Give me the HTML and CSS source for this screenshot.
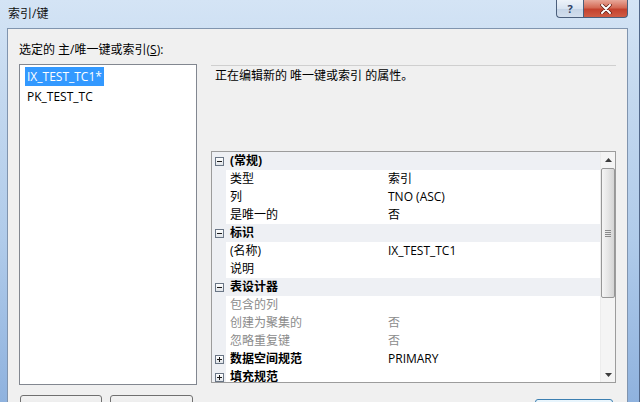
FILE: index.html
```html
<!DOCTYPE html>
<html lang="zh-CN">
<head>
<meta charset="utf-8">
<title>索引/键</title>
<link rel="stylesheet" href="styles.css">
</head>
<body>
<div class="window">
  <div class="titlebar">
    <span class="title">索引/键</span>
    <div class="caption">
      <div class="cap help"><span class="qmark">?</span></div>
      <div class="cap close">
        <svg width="12" height="10" viewBox="0 0 12 10"><path d="M2 1 L10 9 M10 1 L2 9" stroke="#5a1a12" stroke-width="3.4" stroke-linecap="round"/><path d="M2 1 L10 9 M10 1 L2 9" stroke="#ffffff" stroke-width="2" stroke-linecap="round"/></svg>
      </div>
    </div>
  </div>
  <div class="client">
    <div class="label">选定的 主/唯一键或索引(<u>S</u>):</div>
    <div></div>
    <div class="listbox">
      <div class="item"><span class="sel">IX_TEST_TC1*</span></div>
      <div class="item"><span class="txt">PK_TEST_TC</span></div>
    </div>
    <div class="rightpanel">
      <div class="desc">正在编辑新的 唯一键或索引 的属性。</div>
      <div class="pgrid">
        <div class="rows">
          <div class="row cat"><span class="gut"><i class="tog"><b class="h"></b></i></span><span class="name">(常规)</span><span class="val"></span></div>
          <div class="row"><span class="gut"></span><span class="name">类型</span><span class="val">索引</span></div>
          <div class="row"><span class="gut"></span><span class="name">列</span><span class="val">TNO (ASC)</span></div>
          <div class="row"><span class="gut"></span><span class="name">是唯一的</span><span class="val">否</span></div>
          <div class="row cat"><span class="gut"><i class="tog"><b class="h"></b></i></span><span class="name">标识</span><span class="val"></span></div>
          <div class="row"><span class="gut"></span><span class="name">(名称)</span><span class="val">IX_TEST_TC1</span></div>
          <div class="row"><span class="gut"></span><span class="name">说明</span><span class="val"></span></div>
          <div class="row cat"><span class="gut"><i class="tog"><b class="h"></b></i></span><span class="name">表设计器</span><span class="val"></span></div>
          <div class="row dis"><span class="gut"></span><span class="name">包含的列</span><span class="val"></span></div>
          <div class="row dis"><span class="gut"></span><span class="name">创建为聚集的</span><span class="val">否</span></div>
          <div class="row dis"><span class="gut"></span><span class="name">忽略重复键</span><span class="val">否</span></div>
          <div class="row"><span class="gut"><i class="tog"><b class="h"></b><b class="v"></b></i></span><span class="name strong">数据空间规范</span><span class="val">PRIMARY</span></div>
          <div class="row"><span class="gut"><i class="tog"><b class="h"></b><b class="v"></b></i></span><span class="name strong">填充规范</span><span class="val"></span></div>
        </div>
        <div class="sb">
          <div class="sb-btn"><svg width="7" height="4" viewBox="0 0 7 4"><path d="M0 4 L3.5 0 L7 4 Z" fill="#3c3c3c"/></svg></div>
          <div class="thumb"><span class="grip"></span><span class="grip"></span><span class="grip"></span><span class="grip"></span></div>
          <div class="track"></div>
          <div class="sb-btn"><svg width="7" height="4" viewBox="0 0 7 4"><path d="M0 0 L7 0 L3.5 4 Z" fill="#3c3c3c"/></svg></div>
        </div>
      </div>
    </div>
    <div class="btns">
      <div class="btn w82"></div>
      <div class="btn w83"></div>
    </div>
    <div class="btns end">
      <div class="btn focus"></div>
    </div>
  </div>
</div>
</body>
</html>
```

FILE: styles.css
```css
* { box-sizing: border-box; margin: 0; padding: 0; }
html, body { width: 640px; height: 402px; overflow: hidden; }
body {
  font-family: "Open Sans", "Noto Sans CJK SC", sans-serif;
  font-size: 12px;
  color: #000;
  background: #9dbbe0;
}
.window {
  width: 640px;
  height: 402px;
  overflow: hidden;
  display: flex;
  flex-direction: column;
  background: linear-gradient(180deg, #d4e4f5 0%, #c3d8ef 25%, #b0cbea 60%, #8fb2de 100%);
  border-right: 1px solid #52688a;
}
.titlebar {
  height: 28px;
  flex: none;
  display: flex;
  padding: 0 11px 0 8px;
}
.title { line-height: 28px; font-size: 12px; color: #111; }
.caption { margin-left: auto; display: flex; height: 18px; }
.cap {
  height: 18px;
  display: flex;
  align-items: center;
  justify-content: center;
  border: 1px solid #4b5f7c;
  border-top: none;
}
.help {
  width: 27px;
  border-right: none;
  border-radius: 0 0 0 4px;
  background: linear-gradient(180deg, #eef3f9 0%, #d9e4f1 50%, #c6d5e7 55%, #d3dfee 100%);
}
.qmark { font-weight: bold; font-size: 11px; color: #2e4263; line-height: 16px; }
.close {
  width: 45px;
  border-radius: 0 0 4px 0;
  background: linear-gradient(180deg, #e8a89a 0%, #d46a55 45%, #c4422e 55%, #d05c44 100%);
}
.client {
  flex: 1;
  min-height: 0;
  margin-left: 7px;
  margin-right: 11px;
  background: #f0f0f0;
  border: 1px solid #8094ae;
  border-bottom: none;
  display: grid;
  grid-template-columns: 178px 405px;
  grid-template-rows: auto 321px auto;
  column-gap: 14px;
  padding: 14px 12px 0 11px;
  overflow: hidden;
}
.label { line-height: 14px; margin-bottom: 7px; white-space: nowrap; }
.label u { text-decoration: underline; }
.listbox {
  background: #fff;
  border: 1px solid #828790;
  padding: 1px 0 0 5px;
}
.item { height: 20px; display: flex; align-items: center; }
.sel {
  display: inline-block;
  line-height: 19px;
  padding: 0 2px;
  background: #3399ff;
  color: #fff;
}
.txt { padding: 0 2px; }
.rightpanel { display: flex; flex-direction: column; }
.desc {
  height: 86px;
  margin-top: 1px;
  border-top: 1px solid #cfcfcf;
  padding: 3px 0 0 4px;
  line-height: 14px;
  flex: none;
}
.pgrid {
  height: 232px;
  flex: none;
  border: 1px solid #9c9c9c;
  display: flex;
  background: #fff;
}
.rows { flex: 1; overflow: hidden; }
.row { height: 18px; display: flex; line-height: 18px; white-space: nowrap; }
.gut {
  width: 14px;
  flex: none;
  background: #eef0f4;
  display: flex;
  align-items: center;
  justify-content: center;
}
.name { width: 158px; flex: none; padding-left: 4px; overflow: hidden; }
.val { flex: 1; padding-left: 4px; overflow: hidden; }
.cat { background: #eef0f4; }
.cat .name, .strong { font-weight: bold; }
.dis { color: #8c8c8c; }
.tog {
  width: 9px;
  height: 9px;
  border: 1px solid #6a7686;
  background: linear-gradient(180deg, #ffffff, #dfe3e8);
  position: relative;
  display: block;
}
.tog .h { position: absolute; left: 1px; top: 3px; width: 5px; height: 1px; background: #1a1a1a; }
.tog .v { position: absolute; left: 3px; top: 1px; width: 1px; height: 5px; background: #1a1a1a; }
.sb {
  width: 15px;
  flex: none;
  display: flex;
  flex-direction: column;
  background: #f4f4f4;
  border-left: 1px solid #ececec;
}
.sb-btn { height: 16px; flex: none; display: flex; align-items: center; justify-content: center; }
.sb-btn:last-child { height: 15px; }
.thumb {
  height: 130px;
  flex: none;
  border: 1px solid #979797;
  border-radius: 2px;
  background: linear-gradient(90deg, #f5f5f5 0%, #e6e6e6 50%, #d4d4d4 100%);
  display: flex;
  flex-direction: column;
  align-items: center;
  justify-content: center;
  gap: 1px;
}
.grip { width: 6px; height: 1px; background: #8a8a8a; }
.track { flex: 1; }
.btns { display: flex; gap: 8px; margin-top: 10px; padding-left: 1px; }
.btns.end { justify-content: flex-end; margin-top: 14px; padding-right: 3px; }
.btn {
  height: 23px;
  width: 78px;
  border: 1px solid #707070;
  border-radius: 3px;
  background: linear-gradient(180deg, #f2f2f2 0%, #ebebeb 50%, #dddddd 51%, #cfcfcf 100%);
}
.w82 { width: 82px; }
.w83 { width: 83px; }
.focus { border-color: #3c7fb1; background: linear-gradient(180deg, #eaf6fd 0%, #d9f0fc 50%, #bee6fd 51%, #a7d9f5 100%); }
```
